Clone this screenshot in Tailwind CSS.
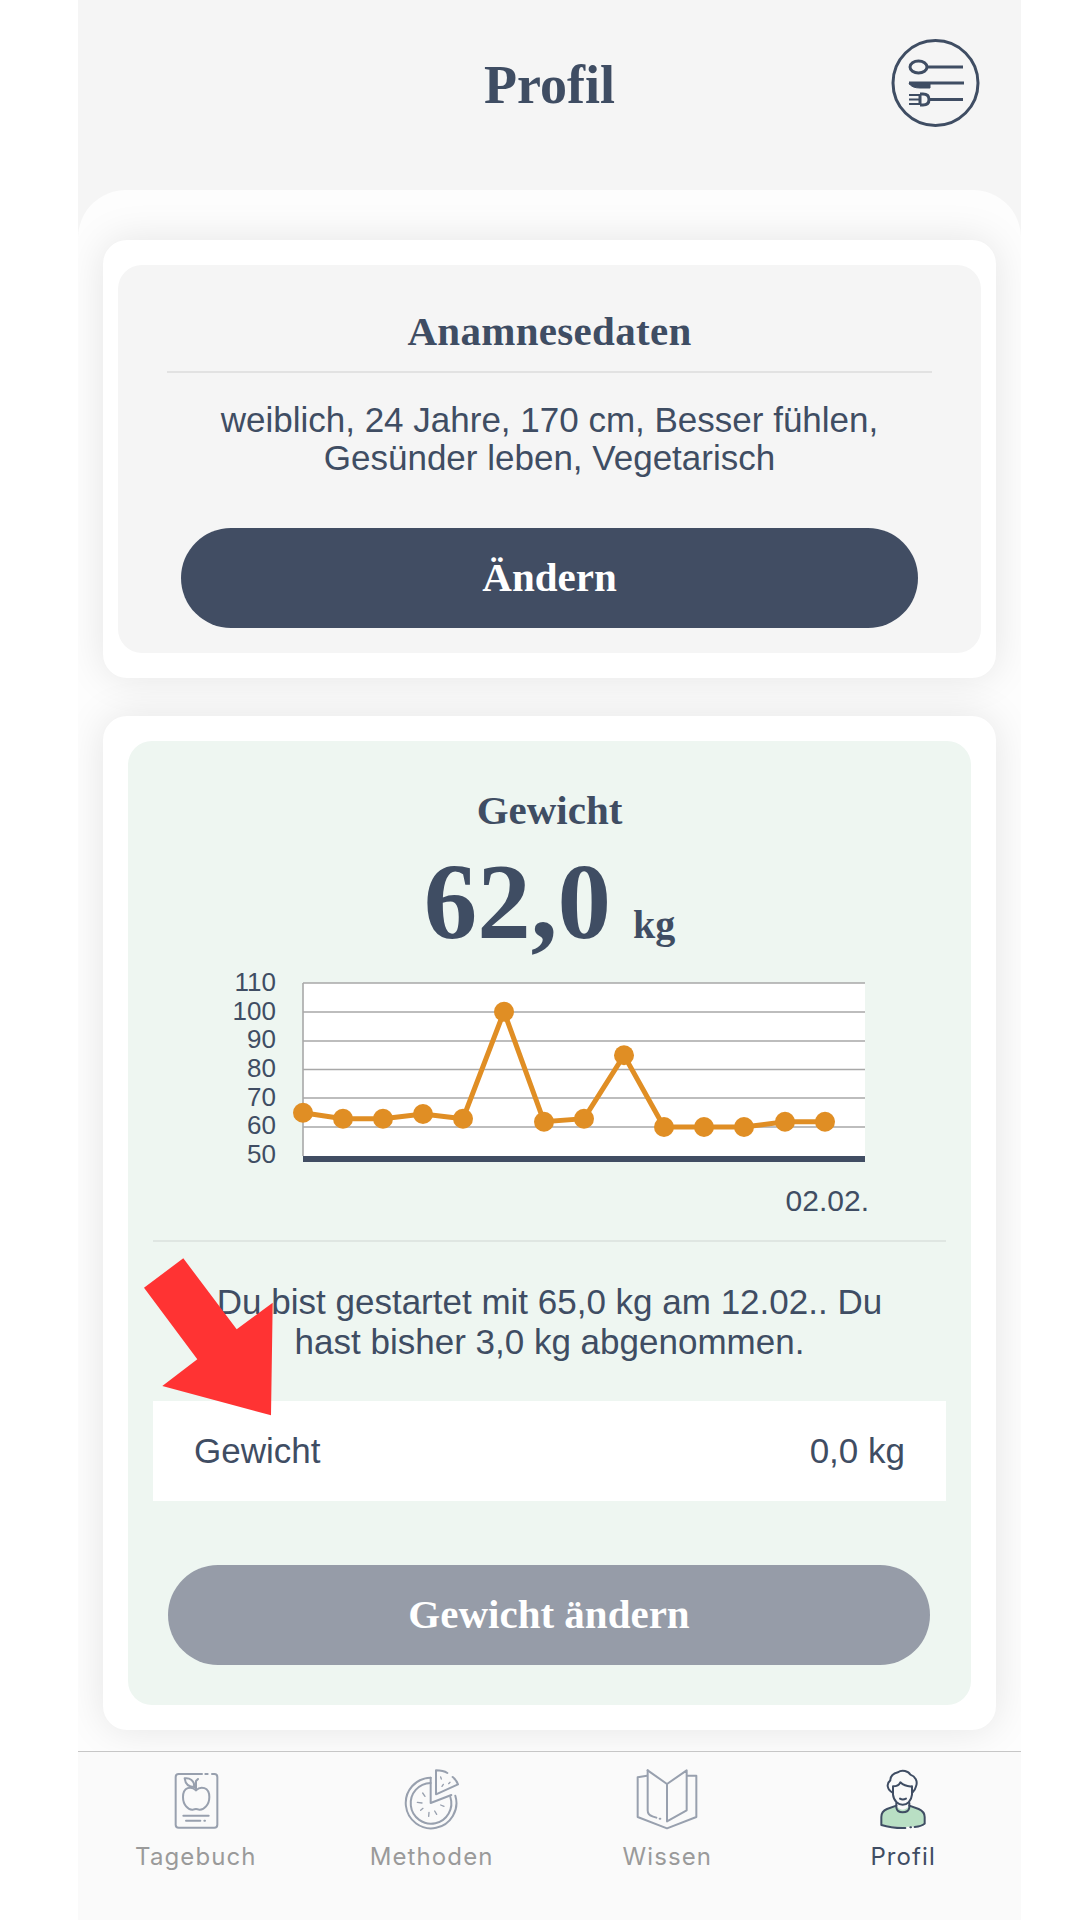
<!DOCTYPE html>
<html lang="de">
<head>
  <meta charset="UTF-8" />
  <title>Profil</title>
  <script src="https://cdn.jsdelivr.net/npm/@tailwindcss/browser@4"></script>
</head>
<body class="bg-white text-[#3f4d63] font-['Liberation_Sans',sans-serif]">
<div class="relative w-[1080px] h-[1920px] overflow-hidden bg-white">
  <main class="ml-[78px] w-[943px] h-[1920px] bg-[#f5f5f5] flex flex-col">

    <header class="h-[190px] shrink-0 grid grid-cols-[1fr_auto_1fr] items-start">
      <div></div>
      <h1 class="mt-[53px] text-[54px] leading-[64px] font-bold font-['Liberation_Serif',serif]">Profil</h1>
      <svg class="justify-self-end mt-[38px] mr-[41px]" width="90" height="90" viewBox="0 0 90 90" fill="none" stroke="#3f4d63" stroke-width="3">
        <circle cx="45.500" cy="45" r="42.500" />
        <ellipse cx="28.500" cy="29" rx="8.500" ry="6" />
        <path d="M37 29H73" />
        <path d="M19 45H74" />
        <path d="M19 45.500Q22 50 30 50H40V45Z" fill="#3f4d63" stroke-width="1" />
        <path d="M19 57H30M19 61.500H30M19 66H30" stroke-width="2" />
        <path d="M30 56V67M30 56H33Q39 56 39 61.500Q39 67 33 67H30M39 61.500H73" />
      </svg>
    </header>

    <section class="h-[1561px] shrink-0 bg-[#fdfdfd] rounded-t-[48px] overflow-hidden pt-[50px] px-[25px] flex flex-col gap-[38px]">

      <div class="h-[438px] shrink-0 bg-white rounded-[24px] p-[25px] px-[15px] shadow-[0_0_40px_rgba(0,0,0,0.1)]">
        <div class="h-[388px] bg-[#f5f5f5] rounded-[24px] pt-[46px] text-center">
          <h2 class="mx-[49px] pb-[20px] border-b-2 border-[#e2e2e2] text-[41px] leading-[40px] tracking-[0.3px] font-bold font-['Liberation_Serif',serif]">Anamnesedaten</h2>
          <p class="mt-[28px] text-[35px] leading-[38px]">weiblich, 24 Jahre, 170 cm, Besser fühlen,<br />Gesünder leben, Vegetarisch</p>
          <button class="mt-[51px] mx-auto w-[737px] h-[100px] rounded-full bg-[#414d63] text-white text-[41px] font-bold font-['Liberation_Serif',serif] flex items-center justify-center">Ändern</button>
        </div>
      </div>

      <div class="h-[1014px] shrink-0 bg-white rounded-[24px] p-[25px] shadow-[0_0_40px_rgba(0,0,0,0.1)]">
        <div class="h-[964px] bg-[#eef6f1] rounded-[24px] pt-[49px]">
          <h2 class="text-center text-[41px] leading-[40px] font-bold font-['Liberation_Serif',serif]">Gewicht</h2>
          <div class="mt-[27px] h-[88px] flex items-baseline justify-center gap-[22px] font-bold font-['Liberation_Serif',serif] leading-[90px]">
            <span class="text-[107px]">62,0</span>
            <span class="text-[40px]">kg</span>
          </div>

          <div class="mt-[23px] pl-[80px] flex items-start gap-[17px]">
            <div class="w-[68px] text-right text-[26px] leading-[28.67px]">
              <div>110</div><div>100</div><div>90</div><div>80</div><div>70</div><div>60</div><div>50</div>
            </div>
            <svg class="overflow-visible" width="582" height="204" viewBox="293 968 582 204">
              <rect x="303" y="983" width="562" height="175" fill="#fff" />
              <g stroke="#a8a8a8" stroke-width="1.600">
                <path d="M303 983H865M303 1012H865M303 1041H865M303 1069.500H865M303 1098H865M303 1127H865M303 983V1156" fill="none" />
              </g>
              <rect x="303" y="1156" width="562" height="6" fill="#414d63" />
              <polyline fill="none" stroke="#e08e24" stroke-width="5" points="303,1112.700 343,1118.700 383,1118.700 423,1114 463,1118.700 504,1011.700 544,1121.700 584,1118.700 624,1055.300 664,1127 704,1127 744,1127 785,1121.700 825,1121.700" />
              <g fill="#e08e24">
                <circle cx="303" cy="1112.700" r="10" /><circle cx="343" cy="1118.700" r="10" /><circle cx="383" cy="1118.700" r="10" />
                <circle cx="423" cy="1114" r="10" /><circle cx="463" cy="1118.700" r="10" /><circle cx="504" cy="1011.700" r="10" />
                <circle cx="544" cy="1121.700" r="10" /><circle cx="584" cy="1118.700" r="10" /><circle cx="624" cy="1055.300" r="10" />
                <circle cx="664" cy="1127" r="10" /><circle cx="704" cy="1127" r="10" /><circle cx="744" cy="1127" r="10" />
                <circle cx="785" cy="1121.700" r="10" /><circle cx="825" cy="1121.700" r="10" />
              </g>
            </svg>
          </div>
          <div class="mt-[14px] pr-[102px] text-right text-[30px] leading-[30px]">02.02.</div>

          <div class="mt-[24px] mx-[25px] border-t-2 border-[#dfe6e2]"></div>
          <p class="mt-[40px] text-center text-[35px] leading-[40px]">Du bist gestartet mit 65,0 kg am 12.02.. Du<br />hast bisher 3,0 kg abgenommen.</p>

          <div class="mt-[39px] mx-[25px] h-[100px] bg-white px-[41px] flex items-center justify-between text-[35px]">
            <span>Gewicht</span>
            <span>0,0 kg</span>
          </div>

          <button class="mt-[64px] ml-[40px] w-[762px] h-[100px] rounded-full bg-[#969ca8] text-white text-[41px] font-bold font-['Liberation_Serif',serif] flex items-center justify-center">Gewicht ändern</button>
        </div>
      </div>
    </section>

    <nav class="flex-1 bg-[#fafafa] border-t-[1.5px] border-[#c6c6c6] grid grid-cols-4 font-['Inter',sans-serif] text-[24px] leading-[30px] tracking-[1.1px] text-[#9a9a9a] z-10">
      <a class="flex flex-col items-center pt-[16px]">
        <svg class="h-[66px] w-[66px]" viewBox="245 85 198 198" fill="none" stroke="#98a0ae" stroke-width="6" stroke-linecap="round" stroke-linejoin="round">
          <path d="M362 103H292Q283 103 283 112V255Q283 264 292 264H399Q408 264 408 255V112Q408 103 399 103H392M372 103H379" />
          <path d="M344 152C330 138 305 142 305 172C305 195 320 212 335 210Q344 206 353 210C368 212 384 195 384 172C384 142 358 138 344 152Z" />
          <path d="M344 152V124L350 118M339 142C322 142 312 132 310 116C325 114 340 122 339 142Z" />
          <path d="M306 228H382M314 243H357M369 243H371" />
        </svg>
        <span class="mt-[8px]">Tagebuch</span>
      </a>
      <a class="flex flex-col items-center pt-[16px]">
        <svg class="h-[66px] w-[66px]" viewBox="955 85 198 198" fill="none" stroke="#98a0ae" stroke-width="6" stroke-linecap="round" stroke-linejoin="round">
          <path d="M1050 114A76 76 0 1 0 1124 168" />
          <path d="M1050 130A61 61 0 1 0 1109 172" />
          <path d="M1050 114V190L1112 166" />
          <path d="M1066 92V164L1132 134M1066 92Q1088 92 1100 100M1116 112Q1128 122 1132 134" />
          <path d="M1084 140L1088 134M1104 132L1108 128M1080 112L1082 118" stroke-width="4" />
          <path d="M1010 188L1024 190M1026 160L1033 170M1020 212L1027 206M1044 230L1045 218M1068 224L1062 214M1090 200L1080 196" stroke-width="4" />
        </svg>
        <span class="mt-[8px]">Methoden</span>
      </a>
      <a class="flex flex-col items-center pt-[16px]">
        <svg class="h-[66px] w-[66px]" viewBox="223 85 198 198" fill="none" stroke="#98a0ae" stroke-width="6" stroke-linecap="round" stroke-linejoin="round">
          <path d="M262 108L234 113V232L322 266L410 232V108L382 108" />
          <path d="M264 92L322 133L381 92V212L322 245V133" />
          <path d="M264 92V212Q264 226 278 230L290 234M300 237H302" />
        </svg>
        <span class="mt-[8px]">Wissen</span>
      </a>
      <a class="flex flex-col items-center pt-[16px] text-[#3f4d63]">
        <svg class="h-[66px] w-[66px]" viewBox="924 85 198 198" fill="none" stroke="#3f4d63" stroke-width="6" stroke-linecap="round" stroke-linejoin="round">
          <path d="M958 256V232Q958 215 975 208L1003 198Q1022 222 1042 198L1070 208Q1088 216 1088 232V256Q1030 268 958 256Z" fill="#b9dfc4" stroke="none" />
          <path d="M958 256V232Q958 215 975 208L1003 198M1042 198L1070 208Q1088 216 1088 232V252Q1080 260 1058 262M1045 263H1047M1030 265Q990 266 958 256" />
          <path d="M993 160C975 150 972 132 985 122C985 105 1000 100 1008 98C1020 88 1040 95 1045 105C1060 110 1068 125 1062 140C1060 150 1054 155 1050 160" />
          <path d="M993 140V165C995 185 1010 195 1022 195C1035 195 1048 185 1050 165V140M993 140Q1010 140 1015 128Q1030 142 1050 140" />
          <path d="M1014 177Q1022 182 1032 177" />
          <path d="M1003 190V204Q1005 218 1022 218Q1040 218 1042 204V190" />
        </svg>
        <span class="mt-[8px]">Profil</span>
      </a>
    </nav>
  </main>

  <!-- roter Hinweispfeil liegt ueber dem Inhalt -->
  <svg class="absolute left-[140px] top-[1255px]" width="140" height="165" viewBox="140 1255 140 165">
    <polygon fill="#ff3333" points="183.300,1258.300 144,1287.700 197.300,1359.300 162.300,1386 271,1415.300 272.700,1302.700 236.700,1329.300" />
  </svg>
</div>
</body>
</html>
